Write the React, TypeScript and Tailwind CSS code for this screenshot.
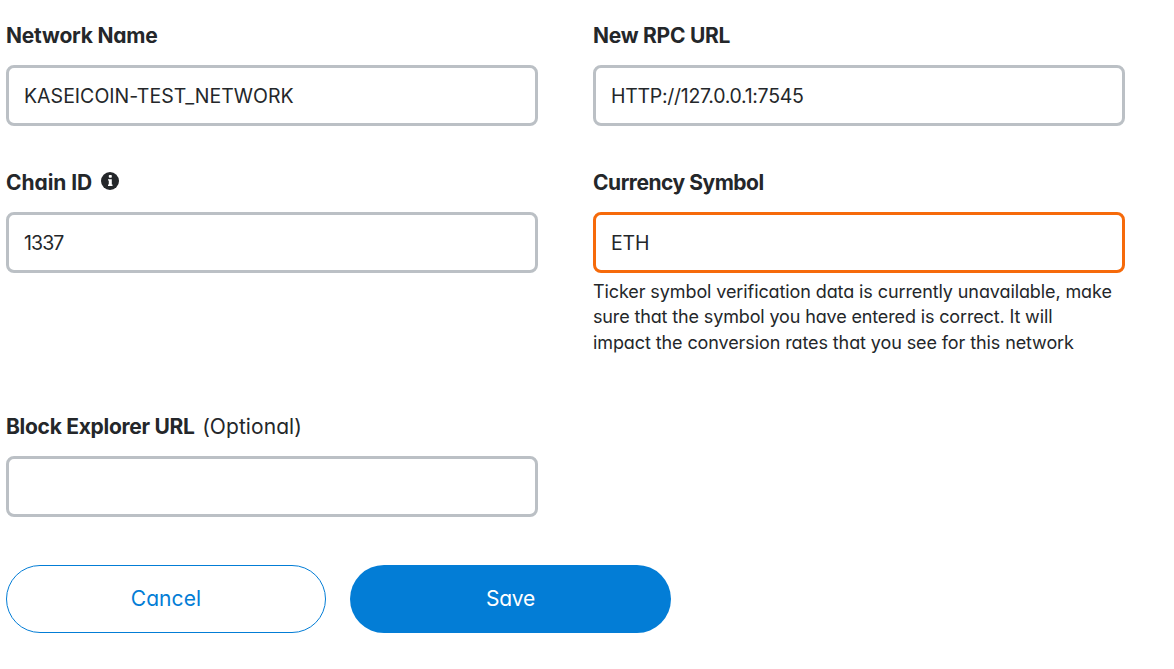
import type { ReactNode } from 'react';

type FieldProps = {
  id: string;
  label: ReactNode;
  value?: string;
  valueClass?: string;
  warning?: boolean;
  children?: ReactNode;
};

function Field({ id, label, value = '', valueClass = '', warning = false, children }: FieldProps) {
  return (
    <div className="w-[532px]">
      <label htmlFor={id} className="flex h-8 items-center whitespace-pre text-[21px] font-bold leading-[30px]">
        {label}
      </label>
      <input
        id={id}
        type="text"
        defaultValue={value}
        className={`mt-[13px] block h-[61px] w-full rounded-lg border-3 bg-white px-[15px] pt-px text-[19.5px] outline-none ${
          warning ? 'border-[#f66a0a]' : 'border-[#bbc0c5]'
        } ${valueClass}`}
      />
      {children}
    </div>
  );
}

function InfoIcon() {
  return (
    <svg viewBox="0 0 18 18" className="mb-1 ml-[9px] size-[18px]" aria-hidden="true">
      <circle cx="9" cy="9" r="9" fill="#24272a" />
      <rect x="7.8" y="3" width="3" height="2.8" rx="0.8" fill="#fff" />
      <path d="M7 7.2h3.8v5.4h.7v1.5H7v-1.5h.8V8.6H7z" fill="#fff" />
    </svg>
  );
}

export default function App() {
  return (
    <form
      className="min-h-[669px] bg-white pl-[6px] pt-5 font-['Inter',sans-serif] text-[#24272a] [font-feature-settings:'cv11']"
      onSubmit={(e) => e.preventDefault()}
    >
      <div className="grid grid-cols-[532px_532px] gap-x-[55px]">
        <div className="h-[147px]">
          <Field id="name" label={<span className="tracking-[-0.2px]">Network Name</span>} value="KASEICOIN-TEST_NETWORK" valueClass="tracking-[0.02px]" />
        </div>
        <div className="h-[147px]">
          <Field id="rpc" label={<span className="tracking-[-0.26px]">New RPC URL</span>} value="HTTP://127.0.0.1:7545" valueClass="tracking-[-0.29px]" />
        </div>
        <div className="h-[244px]">
          <Field
            id="chain"
            label={
              <>
                <span className="tracking-[-0.06px]">Chain ID</span>
                <InfoIcon />
              </>
            }
            value="1337"
            valueClass="tracking-[-0.9px]"
          />
        </div>
        <div className="h-[244px]">
          <Field id="symbol" label={<span className="tracking-[-0.48px]">Currency Symbol</span>} value="ETH" valueClass="tracking-[-0.2px]" warning>
            <p className="mt-[5.6px] whitespace-nowrap text-[18px] leading-[25.5px]">
              <span className="block tracking-[-0.1px]">Ticker symbol verification data is currently unavailable, make</span>
              <span className="block tracking-[-0.14px]">sure that the symbol you have entered is correct. It will</span>
              <span className="block tracking-[-0.1px]">impact the conversion rates that you see for this network</span>
            </p>
          </Field>
        </div>
        <Field
          id="explorer"
          label={
            <>
              <span className="tracking-[-0.29px]">Block Explorer URL</span>
              <span className="ml-[7.5px] font-normal tracking-[0.07px]">(Optional)</span>
            </>
          }
        />
      </div>
      <div className="mt-12 flex gap-6">
        <button type="button" className="h-[68px] w-80 rounded-full border border-[#037dd6] bg-white text-[21px] tracking-[0.1px] text-[#037dd6]">
          Cancel
        </button>
        <button type="submit" className="h-[68px] w-[321px] rounded-full bg-[#037dd6] text-[21px] tracking-[-0.3px] text-white">
          Save
        </button>
      </div>
    </form>
  );
}
